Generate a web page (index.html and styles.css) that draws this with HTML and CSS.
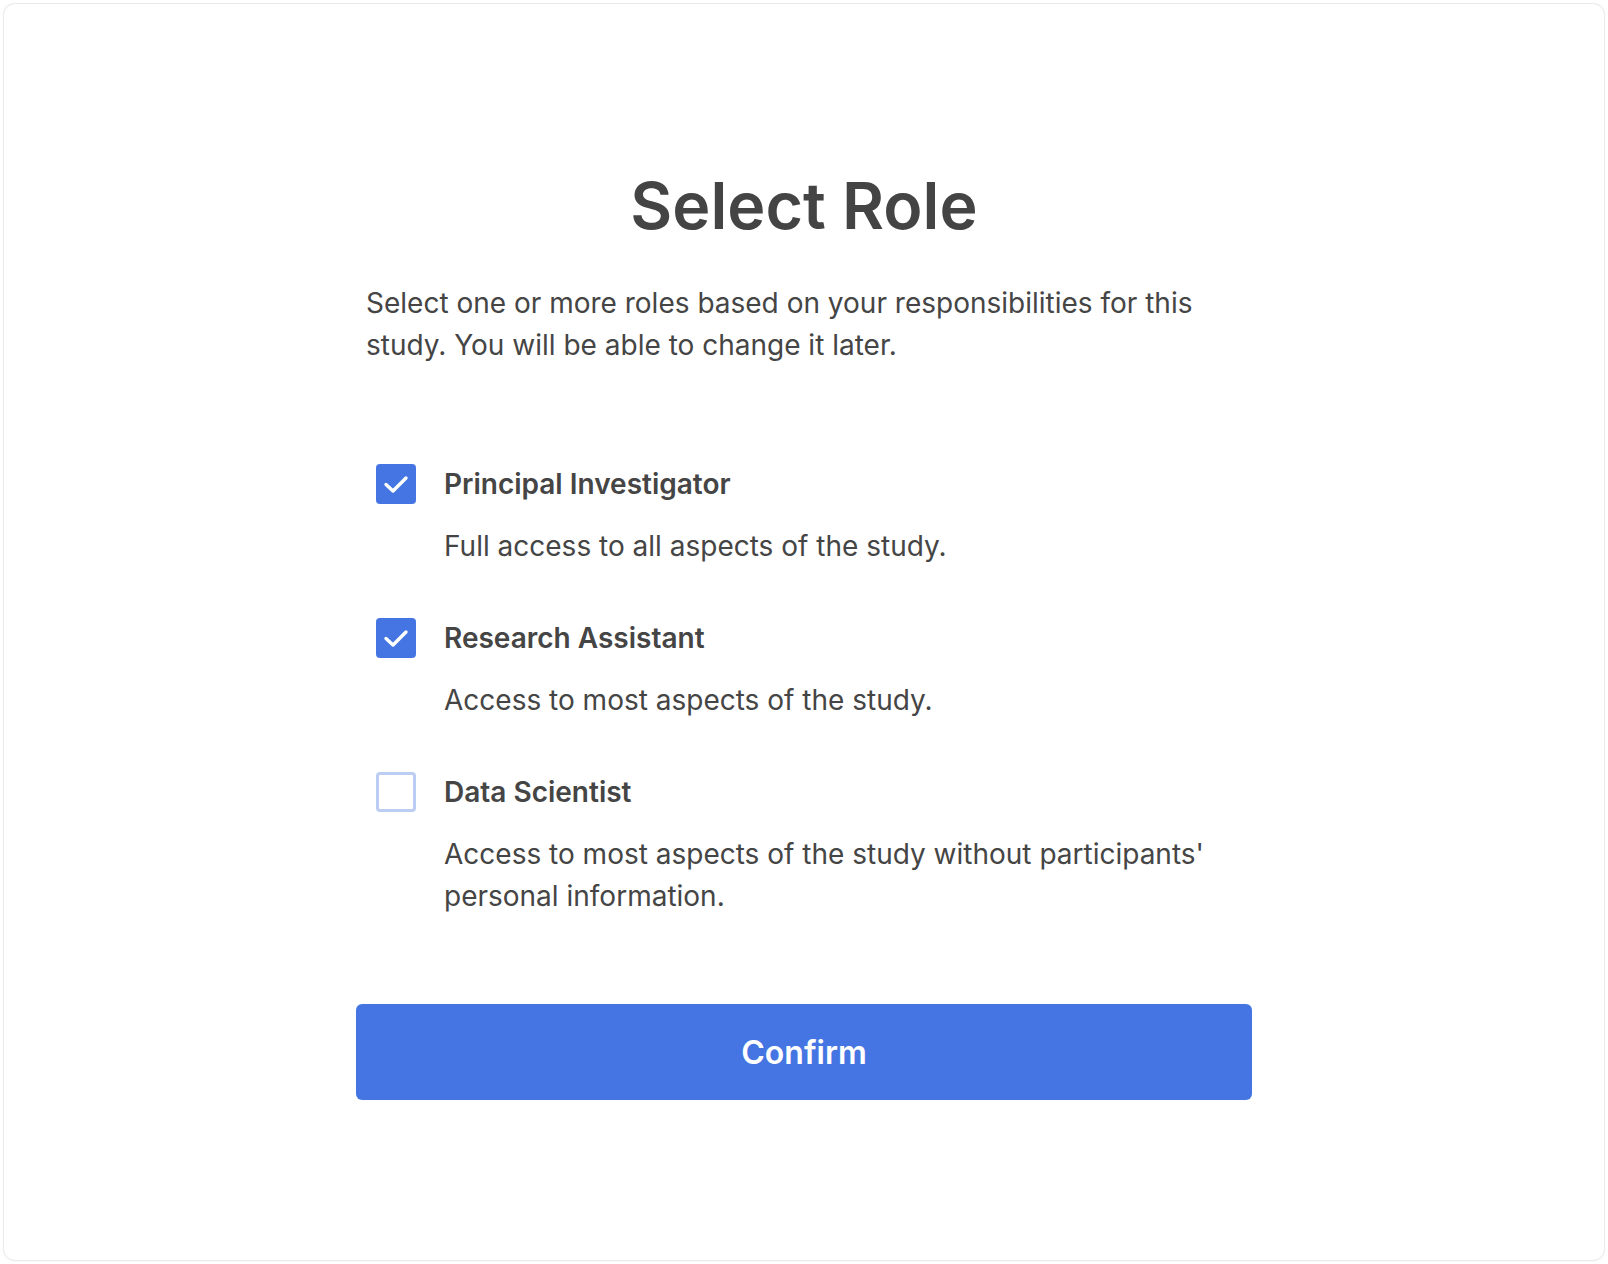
FILE: index.html
```html
<!DOCTYPE html>
<html lang="en">
<head>
<meta charset="utf-8">
<title>Select Role</title>
<link rel="stylesheet" href="styles.css">
</head>
<body>
<div class="card">
  <div class="content">
    <h1 class="title">Select Role</h1>
    <p class="intro">Select one or more roles based on your responsibilities for this study. You will be able to change it later.</p>
    <div class="roles">
      <div class="role">
        <span class="box checked">
          <svg viewBox="0 0 40 40" width="40" height="40"><polyline points="10,20.5 17,27 30,14" fill="none" stroke="#fff" stroke-width="3.4" stroke-linecap="round" stroke-linejoin="round"/></svg>
        </span>
        <span class="label">Principal Investigator</span>
        <span class="desc">Full access to all aspects of the study.</span>
      </div>
      <div class="role">
        <span class="box checked">
          <svg viewBox="0 0 40 40" width="40" height="40"><polyline points="10,20.5 17,27 30,14" fill="none" stroke="#fff" stroke-width="3.4" stroke-linecap="round" stroke-linejoin="round"/></svg>
        </span>
        <span class="label">Research Assistant</span>
        <span class="desc">Access to most aspects of the study.</span>
      </div>
      <div class="role">
        <span class="box"></span>
        <span class="label">Data Scientist</span>
        <span class="desc">Access to most aspects of the study without participants' personal information.</span>
      </div>
    </div>
    <button class="confirm">Confirm</button>
  </div>
</div>
</body>
</html>
```

FILE: styles.css
```css
* { box-sizing: border-box; }
html, body { height: 100%; }
body {
  margin: 3px;
  background: #ffffff;
  font-family: Inter, "Noto Sans", "Liberation Sans", sans-serif;
  color: #454545;
}
.card {
  height: calc(100vh - 6px);
  border: 1px solid #e9e9e9;
  border-radius: 12px;
  box-shadow: 0 0 3px rgba(0,0,0,0.06);
  background: #fff;
  display: flex;
  justify-content: center;
  padding-top: 164px;
}
.content {
  width: 896px;
  display: flex;
  flex-direction: column;
}
.title {
  margin: 0;
  font-size: 64.5px;
  line-height: 77px;
  font-weight: 600;
  text-align: center;
  color: #444;
}
.intro {
  margin: 37px 0 0;
  padding: 0 10px;
  font-size: 28px;
  line-height: 42px;
  color: #454545;
}
.roles {
  margin-top: 98px;
  padding-left: 20px;
  display: flex;
  flex-direction: column;
  gap: 51px;
}
.role {
  display: grid;
  grid-template-columns: 40px 1fr;
  column-gap: 28px;
  row-gap: 21px;
  align-items: center;
}
.box {
  width: 40px;
  height: 40px;
  border-radius: 4px;
  border: 3px solid #bccdf4;
  background: #fff;
  display: block;
}
.box.checked {
  border: none;
  background: #4475e2;
}
.box svg { display: block; }
.label {
  font-size: 28px;
  font-weight: 600;
  color: #454545;
  line-height: 40px;
}
.desc {
  grid-column: 2;
  font-size: 28px;
  line-height: 42px;
  color: #454545;
}
.confirm {
  margin-top: 87px;
  height: 96px;
  border: none;
  border-radius: 6px;
  background: #4475e2;
  color: #fff;
  font-family: inherit;
  font-size: 32px;
  font-weight: 600;
  cursor: pointer;
}
```
